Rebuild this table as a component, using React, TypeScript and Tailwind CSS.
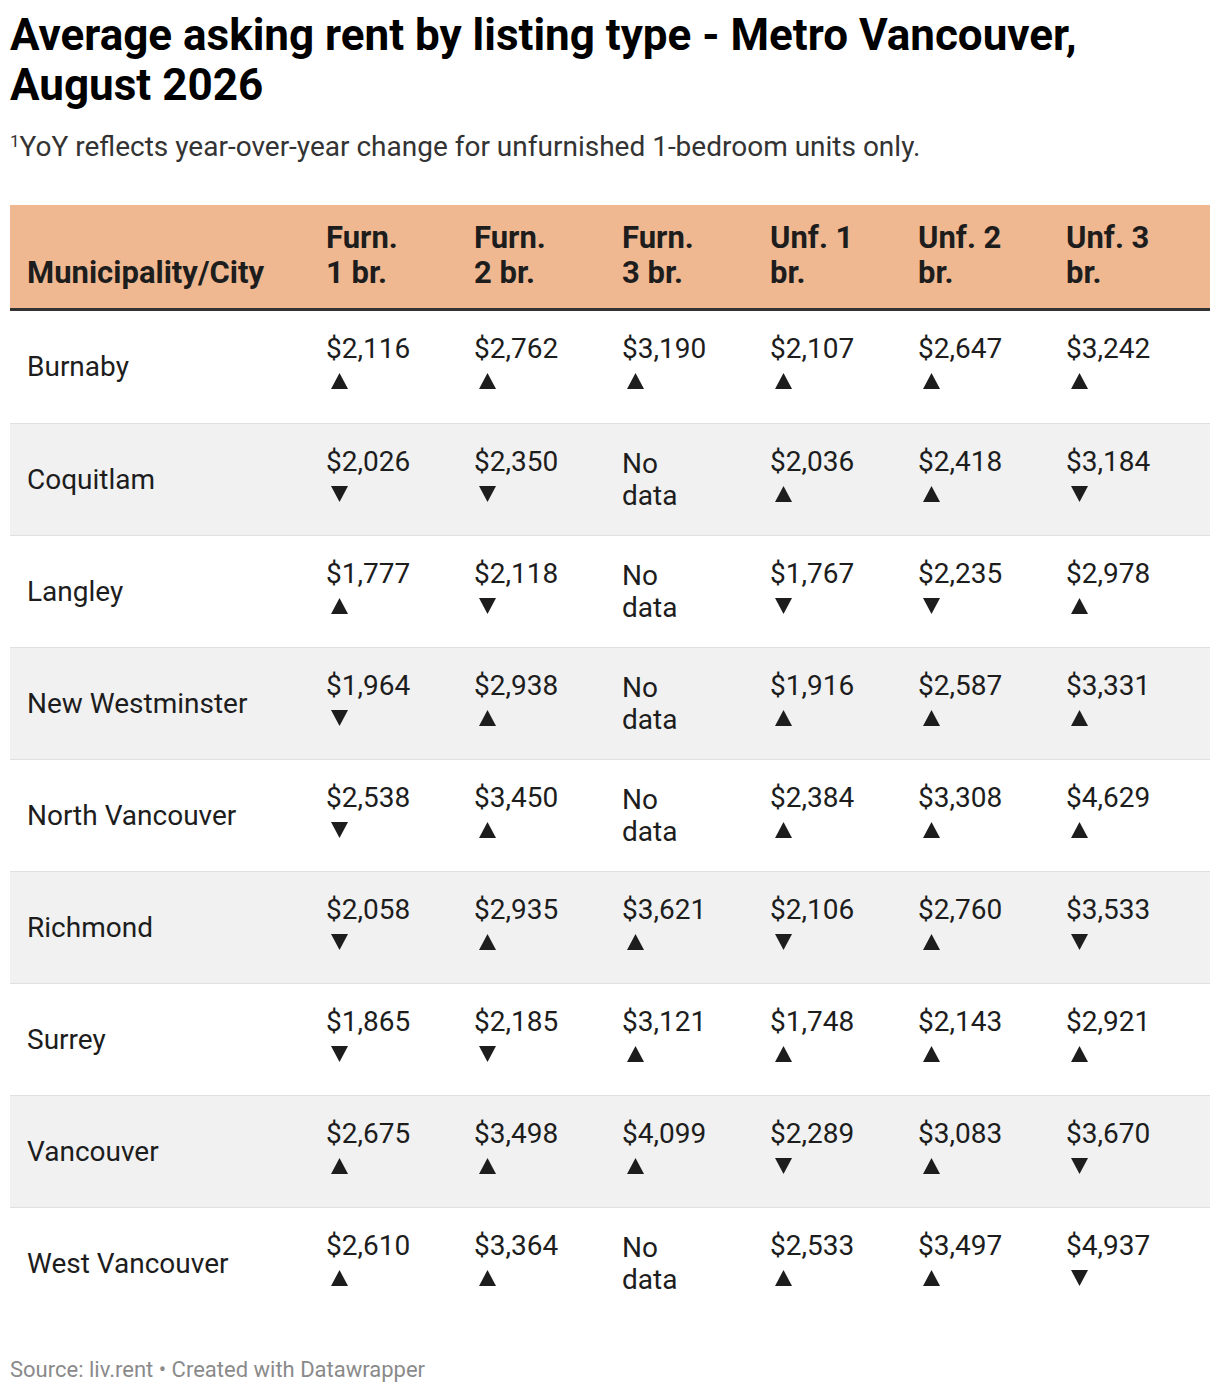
import React from "react";

type Cell = { v: string; up: boolean } | null;

interface Row {
  city: string;
  cells: Cell[];
}

const u = (v: string): Cell => ({ v, up: true });
const d = (v: string): Cell => ({ v, up: false });

const rows: Row[] = [
  { city: "Burnaby", cells: [u("$2,116"), u("$2,762"), u("$3,190"), u("$2,107"), u("$2,647"), u("$3,242")] },
  { city: "Coquitlam", cells: [d("$2,026"), d("$2,350"), null, u("$2,036"), u("$2,418"), d("$3,184")] },
  { city: "Langley", cells: [u("$1,777"), d("$2,118"), null, d("$1,767"), d("$2,235"), u("$2,978")] },
  { city: "New Westminster", cells: [d("$1,964"), u("$2,938"), null, u("$1,916"), u("$2,587"), u("$3,331")] },
  { city: "North Vancouver", cells: [d("$2,538"), u("$3,450"), null, u("$2,384"), u("$3,308"), u("$4,629")] },
  { city: "Richmond", cells: [d("$2,058"), u("$2,935"), u("$3,621"), d("$2,106"), u("$2,760"), d("$3,533")] },
  { city: "Surrey", cells: [d("$1,865"), d("$2,185"), u("$3,121"), u("$1,748"), u("$2,143"), u("$2,921")] },
  { city: "Vancouver", cells: [u("$2,675"), u("$3,498"), u("$4,099"), d("$2,289"), u("$3,083"), d("$3,670")] },
  { city: "West Vancouver", cells: [u("$2,610"), u("$3,364"), null, u("$2,533"), u("$3,497"), d("$4,937")] },
];

const headers = [
  ["Furn.", "1 br."],
  ["Furn.", "2 br."],
  ["Furn.", "3 br."],
  ["Unf. 1", "br."],
  ["Unf. 2", "br."],
  ["Unf. 3", "br."],
];

function Arrow({ up }: { up: boolean }) {
  return (
    <div className="h-[32px] flex items-center pl-[5px]">
      <svg width="17" height="16" viewBox="0 0 17 16">
        {up ? (
          <polygon points="8.5,0 17,16 0,16" fill="#1d1d1d" />
        ) : (
          <polygon points="0,0 17,0 8.5,16" fill="#1d1d1d" />
        )}
      </svg>
    </div>
  );
}

export default function App() {
  return (
    <div
      className="bg-white text-[#1d1d1d] px-[10px] pt-[10px] w-[1220px] h-[1394px]"
      style={{ fontFamily: "Roboto, 'Liberation Sans', sans-serif" }}
    >
      <h1 className="text-[44px] leading-[50px] font-bold text-black">
        Average asking rent by listing type - Metro Vancouver, August 2026
      </h1>
      <p className="mt-[14px] text-[28px] leading-[34px] text-[#333]">
        <span className="text-[17px] align-[9px]">1</span>YoY reflects year-over-year change for unfurnished 1-bedroom units only.
      </p>

      <div className="mt-[41px] w-[1200px]">
        {/* header */}
        <div className="grid grid-cols-[312px_repeat(6,148px)] bg-[#f0b890] border-b-[3px] border-[#333] pt-[15px] pb-[18px] items-end">
          <div className="pl-[17px] text-[31px] leading-[35px] font-bold">Municipality/City</div>
          {headers.map((h, i) => (
            <div key={i} className="pl-[4px] text-[31px] leading-[35px] font-bold">
              <div>{h[0]}</div>
              <div>{h[1]}</div>
            </div>
          ))}
        </div>

        {/* body */}
        {rows.map((r, i) => (
          <div
            key={r.city}
            className={
              "grid grid-cols-[312px_repeat(6,148px)] h-[112px] items-center text-[28px] leading-[32px] " +
              (i > 0 ? "border-t border-[#e0e0e0] " : "") +
              (i % 2 === 1 ? "bg-[#f1f1f1]" : "bg-white")
            }
          >
            <div className="pl-[17px]">{r.city}</div>
            {r.cells.map((c, j) => (
              <div key={j} className="pl-[4px]">
                {c ? (
                  <div className="-mt-[4px]">
                    <div>{c.v}</div>
                    <Arrow up={c.up} />
                  </div>
                ) : (
                  <div>
                    <div>No</div>
                    <div>data</div>
                  </div>
                )}
              </div>
            ))}
          </div>
        ))}
      </div>

      <div className="mt-[38px] text-[22px] leading-[26px] text-[#8a8a8a]">
        Source: liv.rent • Created with Datawrapper
      </div>
    </div>
  );
}
